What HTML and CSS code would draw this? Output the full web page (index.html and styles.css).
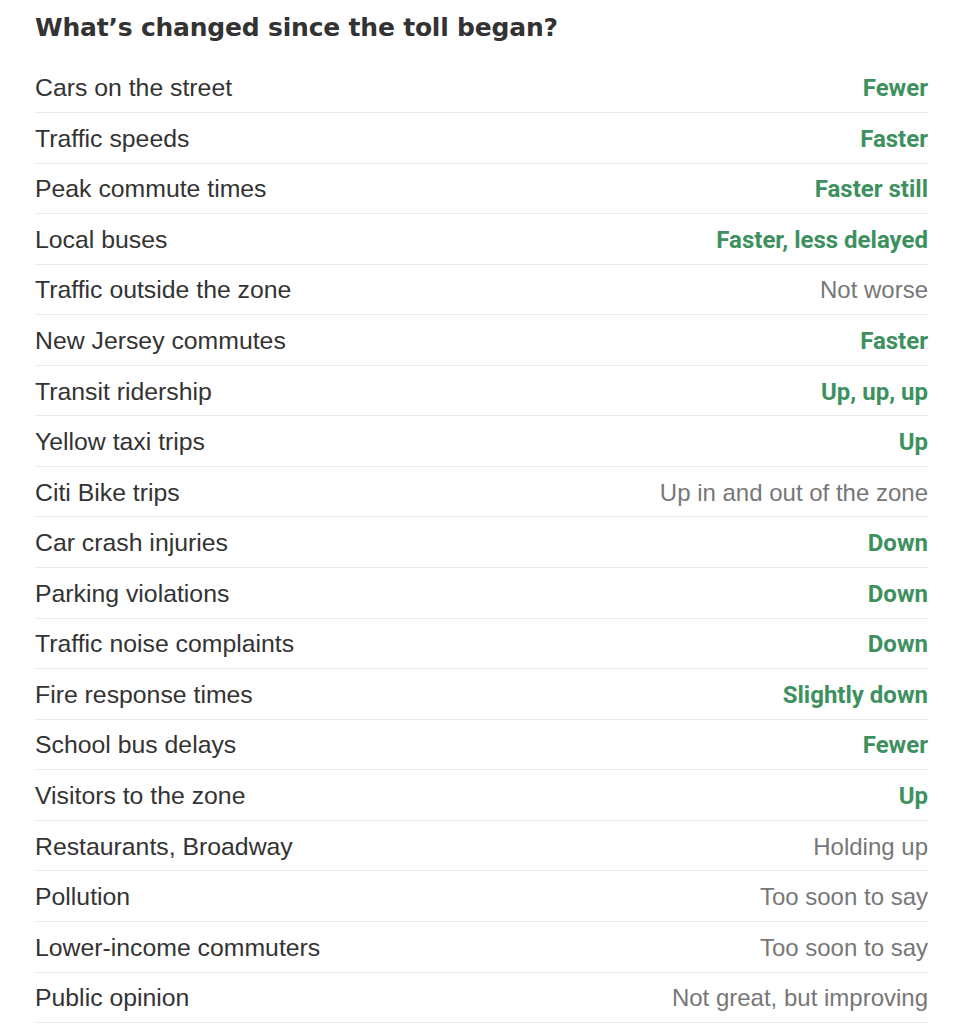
FILE: index.html
```html
<!DOCTYPE html>
<html lang="en">
<head>
<meta charset="utf-8">
<title>What’s changed since the toll began?</title>
<link rel="stylesheet" href="styles.css">
</head>
<body>
<section class="card">
  <h2 class="title">What’s changed since the toll began?</h2>
  <ul class="list">
    <li class="row"><span class="label">Cars on the street</span><span class="val good">Fewer</span></li>
    <li class="row"><span class="label">Traffic speeds</span><span class="val good">Faster</span></li>
    <li class="row"><span class="label">Peak commute times</span><span class="val good">Faster still</span></li>
    <li class="row"><span class="label">Local buses</span><span class="val good">Faster, less delayed</span></li>
    <li class="row"><span class="label">Traffic outside the zone</span><span class="val neutral">Not worse</span></li>
    <li class="row"><span class="label">New Jersey commutes</span><span class="val good">Faster</span></li>
    <li class="row"><span class="label">Transit ridership</span><span class="val good">Up, up, up</span></li>
    <li class="row"><span class="label">Yellow taxi trips</span><span class="val good">Up</span></li>
    <li class="row"><span class="label">Citi Bike trips</span><span class="val neutral">Up in and out of the zone</span></li>
    <li class="row"><span class="label">Car crash injuries</span><span class="val good">Down</span></li>
    <li class="row"><span class="label">Parking violations</span><span class="val good">Down</span></li>
    <li class="row"><span class="label">Traffic noise complaints</span><span class="val good">Down</span></li>
    <li class="row"><span class="label">Fire response times</span><span class="val good">Slightly down</span></li>
    <li class="row"><span class="label">School bus delays</span><span class="val good">Fewer</span></li>
    <li class="row"><span class="label">Visitors to the zone</span><span class="val good">Up</span></li>
    <li class="row"><span class="label">Restaurants, Broadway</span><span class="val neutral">Holding up</span></li>
    <li class="row"><span class="label">Pollution</span><span class="val neutral">Too soon to say</span></li>
    <li class="row"><span class="label">Lower-income commuters</span><span class="val neutral">Too soon to say</span></li>
    <li class="row"><span class="label">Public opinion</span><span class="val neutral">Not great, but improving</span></li>
  </ul>
</section>
</body>
</html>
```
FILE: styles.css
```css
html, body {
  margin: 0;
  padding: 0;
  background: #fff;
}
body {
  font-family: "Liberation Sans", Arial, sans-serif;
  color: #333;
}
.card {
  width: 893px;
  padding: 0 0 0 35px;
}
.title {
  margin: 0;
  padding-top: 12px;
  height: 50px;
  box-sizing: border-box;
  font-family: "DejaVu Sans", "Liberation Sans", sans-serif;
  font-size: 25px;
  font-weight: 700;
  line-height: 32px;
  color: #333;
  letter-spacing: -0.2px;
}
.list {
  list-style: none;
  margin: 0;
  padding: 0;
  margin-top: 12.4px;
}
.row {
  display: flex;
  justify-content: space-between;
  align-items: center;
  height: 50.57px;
  box-sizing: border-box;
  border-bottom: 1px solid #ebebeb;
  padding-top: 2px;
}
.label {
  font-size: 24.8px;
  line-height: 30px;
  color: #333;
}
.val {
  font-size: 24px;
  line-height: 30px;
}
.good {
  font-family: Roboto, "Liberation Sans", sans-serif;
  color: #3e915f;
  font-weight: 700;
  font-size: 24px;
}
.neutral {
  color: #777;
}
```
